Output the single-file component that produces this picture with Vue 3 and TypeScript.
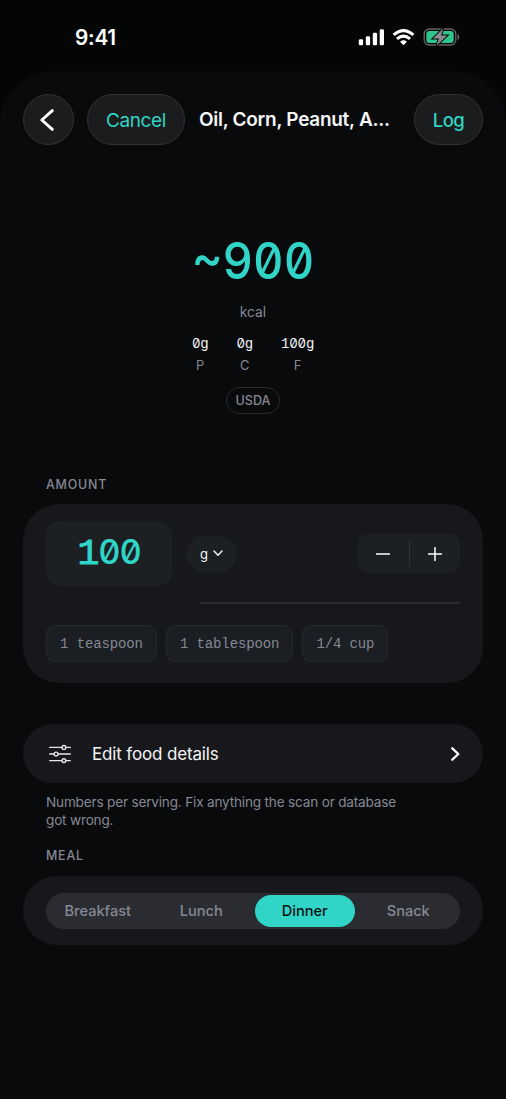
<script setup lang="ts">
import { ref } from 'vue'

interface Macro { value: string; label: string }

const macros: Macro[] = [
  { value: '0g', label: 'P' },
  { value: '0g', label: 'C' },
  { value: '100g', label: 'F' },
]
const portions: string[] = ['1 teaspoon', '1 tablespoon', '1/4 cup']
const meals: string[] = ['Breakfast', 'Lunch', 'Dinner', 'Snack']
const meal = ref('Dinner')
const amount = ref(100)
const step = (by: number): void => {
  amount.value = Math.max(0, amount.value + by)
}
</script>

<template>
  <div class="screen">
    <header class="status">
      <span class="time">9:41</span>
      <div class="status-icons">
        <svg class="signal" width="26" height="17" viewBox="0 0 26 17" fill="#fff">
          <rect x="0.8" y="10.2" width="4.3" height="6.1" rx="1.3" />
          <rect x="7.8" y="7.2" width="4.3" height="9.1" rx="1.3" />
          <rect x="14.8" y="3.8" width="4.3" height="12.5" rx="1.3" />
          <rect x="21.7" y="0.3" width="4.3" height="16" rx="1.3" />
        </svg>
        <svg class="wifi" width="23" height="17" viewBox="0 0 23 17">
          <g fill="none" stroke="#fff" stroke-width="3">
            <path d="M1.6 5.9 Q11.5 -2.7 21.4 5.9" />
            <path d="M5 9.9 Q11.5 4.3 18 9.9" />
          </g>
          <path d="M8.1 12.7 Q11.5 9.8 14.9 12.7 L11.5 16.2 Z" fill="#fff" />
        </svg>
        <svg class="battery" width="37" height="18" viewBox="0 0 37 18">
          <rect x="1.2" y="1" width="31.6" height="16" rx="5" fill="none" stroke="#626465" stroke-width="1.3" />
          <rect x="3.3" y="3.1" width="27.4" height="11.8" rx="3" fill="#30c48d" />
          <path d="M34.5 6 Q36.3 6.7 36.3 9 Q36.3 11.3 34.5 12 Z" fill="#626465" />
          <path d="M20.4 0.2 L10 10.4 H16 L13.4 17.8 L24.2 7.5 H18 Z" fill="#8a8c8e" stroke="#050706" stroke-width="2" paint-order="stroke" />
        </svg>
      </div>
    </header>

    <main class="sheet">
      <nav class="toolbar">
        <button class="glass back" aria-label="Back">
          <svg width="14" height="24" viewBox="0 0 14 24" fill="none" stroke="#fff" stroke-width="2.9" stroke-linecap="round" stroke-linejoin="round"><path d="M12.3 2.6 L1.8 12 L12.3 21.4" /></svg>
        </button>
        <button class="glass cancel">Cancel</button>
        <h1 class="title">Oil, Corn, Peanut, A...</h1>
        <button class="glass log">Log</button>
      </nav>

      <section class="summary">
        <div class="calories">~900</div>
        <div class="unit">kcal</div>
        <div class="macros">
          <div v-for="m in macros" :key="m.label" class="macro">
            <span class="macro-value"><span v-for="(c, i) in m.value" :key="i" :class="{ zero: c === '0' }">{{ c }}</span></span>
            <span class="macro-label">{{ m.label }}</span>
          </div>
        </div>
        <span class="source">USDA</span>
      </section>

      <h2 class="label amount-label">AMOUNT</h2>
      <section class="card amount">
        <div class="amount-row">
          <div class="amount-input"><div><span v-for="(c, i) in String(amount)" :key="i" :class="{ zero: c === '0' }">{{ c }}</span></div></div>
          <button class="unit-menu">
            <span>g</span>
            <svg width="10" height="7" viewBox="0 0 10 7" fill="none" stroke="#f2f3f5" stroke-width="1.5" stroke-linecap="round" stroke-linejoin="round"><path d="M1 1.1 L5 5.2 L9 1.1" /></svg>
          </button>
          <div class="stepper">
            <button aria-label="Decrease" @click="step(-1)"><svg width="14" height="14" viewBox="0 0 14 14"><path d="M0.6 7 H13.4" /></svg></button>
            <i class="split"></i>
            <button aria-label="Increase" @click="step(1)"><svg width="14" height="14" viewBox="0 0 14 14"><path d="M0.6 7 H13.4 M7 0.6 V13.4" /></svg></button>
          </div>
        </div>
        <div class="divider"></div>
        <div class="chips">
          <button v-for="p in portions" :key="p" class="chip">{{ p }}</button>
        </div>
      </section>

      <button class="card edit">
        <svg width="22" height="20" viewBox="0 0 22 20" fill="none" stroke="#e7e8ea" stroke-width="1.35" stroke-linecap="round">
          <path d="M0.7 3.4 H12.8 M17 3.4 H21.3 M0.7 10 H5 M9.2 10 H21.3 M0.7 16.6 H12.8 M17 16.6 H21.3" />
          <circle cx="14.9" cy="3.4" r="1.9" />
          <circle cx="7.1" cy="10" r="1.9" />
          <circle cx="14.9" cy="16.6" r="1.9" />
        </svg>
        <span class="edit-text">Edit food details</span>
        <svg width="9" height="14" viewBox="0 0 9 14" fill="none" stroke="#fff" stroke-width="2.3" stroke-linecap="round" stroke-linejoin="round"><path d="M1.3 1.3 L7.3 7 L1.3 12.7" /></svg>
      </button>
      <p class="note">Numbers per serving. Fix anything the scan or database<br />got wrong.</p>

      <h2 class="label meal-label">MEAL</h2>
      <section class="card meal">
        <div class="segments">
          <button v-for="m in meals" :key="m" class="segment" :class="{ active: m === meal }" @click="meal = m">{{ m }}</button>
        </div>
      </section>
    </main>
  </div>
</template>

<style>
html, body { margin: 0; background: #040605; }
</style>

<style scoped>
* { box-sizing: border-box; }
button { border: 0; padding: 0; margin: 0; background: none; color: inherit; font: inherit; }
svg { display: block; flex: none; }
.screen {
  width: 506px; height: 1099px; overflow: hidden;
  background: #040605; color: #f3f4f6;
  font-family: Inter, "Liberation Sans", sans-serif;
}
.status { height: 71px; padding: 27px 46px 0 75px; display: flex; justify-content: space-between; align-items: flex-start; }
.time { font-size: 20.8px; line-height: 22px; font-weight: 600; letter-spacing: -0.25px; color: #fff; }
.status-icons { display: flex; align-items: center; margin-top: 1px; }
.wifi { margin-left: 8px; }
.battery { margin-left: 8px; }
.sheet { height: 1028px; padding: 23px 23px 0; border-radius: 52px 52px 0 0; background: #090a0c; }
.toolbar { display: flex; align-items: center; height: 51px; }
.glass {
  height: 51px; border-radius: 26px; background: #1b1c1e; border: 1px solid #303234;
  display: flex; align-items: center; justify-content: center; color: #2fd4c5; flex: none;
}
.back { width: 51px; padding-right: 4px; }
.cancel { width: 98px; margin-left: 13px; padding-top: 1px; font-size: 19px; letter-spacing: -0.35px; }
.title { margin: 0 auto 0 14px; font-size: 19px; font-weight: 600; letter-spacing: -0.28px; white-space: nowrap; color: #f5f6f7; }
.log { width: 69px; padding-top: 1px; font-size: 18.5px; font-weight: 500; letter-spacing: -0.6px; }

.summary { display: flex; flex-direction: column; align-items: center; height: 321px; padding-top: 88px; }
.calories { font-size: 51px; line-height: 56px; font-weight: 500; color: #30d5c8; font-feature-settings: "zero", "tnum"; letter-spacing: 0; transform: scaleX(0.925); }
.unit { margin-top: 14px; font-size: 13.8px; line-height: 18px; color: #858894; }
.macros { display: flex; gap: 28px; margin-top: 13px; }
.macro { display: flex; flex-direction: column; align-items: center; }
.macro-value { font: 14px/18px "Liberation Mono", monospace; letter-spacing: -0.2px; }
.zero { font-family: Inter, sans-serif; font-feature-settings: "zero", "tnum"; }
.macro-value .zero { font-size: 13.2px; }
.macro-label { margin-top: 3px; font-size: 13px; line-height: 18px; color: #858894; }
.source { margin-top: 13px; width: 54px; height: 27px; border: 1px solid #292b2e; border-radius: 14px; font-size: 12.5px; line-height: 25px; font-weight: 500; text-align: center; color: #858894; }

.label { margin: 0 0 0 23px; font-size: 12.4px; line-height: 18px; font-weight: 500; letter-spacing: 0.8px; color: #858894; }
.amount-label { margin-top: 10px; }
.card { background: #17181b; }
.amount { margin-top: 10px; height: 179px; border-radius: 36px; padding: 17px 23px; }
.amount-row { display: flex; align-items: center; }
.amount-input { width: 126px; height: 65px; border-radius: 14px; background: #1d2023; color: #30d5c8; display: flex; align-items: center; justify-content: center; font: 400 36.5px/40px "Liberation Mono", monospace; -webkit-text-stroke: 1px #30d5c8; letter-spacing: -1px; }
.amount-input .zero { font-size: 34.5px; font-weight: 500; letter-spacing: -1.2px; -webkit-text-stroke: 0; }
.unit-menu { margin-left: 14px; width: 51px; height: 36px; border-radius: 18px; background: #1d2023; display: flex; align-items: center; justify-content: center; gap: 5px; font-size: 13px; }
.stepper { margin-left: auto; width: 102px; height: 39px; border-radius: 10px; background: #1d2023; display: flex; align-items: center; }
.stepper button { flex: 1; display: flex; justify-content: center; }
.stepper path { fill: none; stroke: #fff; stroke-width: 1.5; stroke-linecap: round; }
.split { width: 1px; height: 26px; background: #303236; }
.divider { height: 2px; margin: 16px 0 0 154px; background: #2a2c30; }
.chips { display: flex; gap: 9px; margin-top: 21px; }
.chip { height: 37px; padding: 0 13.1px; border: 1px solid #25282d; border-radius: 9px; background: #1b1e22; color: #858894; font: 14px/20px "Liberation Mono", monospace; letter-spacing: -0.13px; }

.edit { width: 100%; height: 59px; margin-top: 41px; border-radius: 30px; padding: 0 23px 0 26px; display: flex; align-items: center; }
.edit-text { margin: 0 auto 0 21px; font-size: 17px; letter-spacing: -0.15px; }
.note { margin: 10px 0 0 23px; font-size: 13.6px; line-height: 18px; letter-spacing: -0.19px; color: #858894; white-space: nowrap; }
.meal-label { margin-top: 18px; }
.meal { margin-top: 11px; height: 69px; border-radius: 34px; padding: 17px 23px; }
.segments { height: 36px; border-radius: 18px; padding: 2px; background: #2b2c31; display: flex; gap: 4px; }
.segment { flex: 1; border-radius: 16px; font-size: 14.6px; font-weight: 500; color: #858894; }
.segment.active { background: #30d5c8; color: #071110; }
</style>
